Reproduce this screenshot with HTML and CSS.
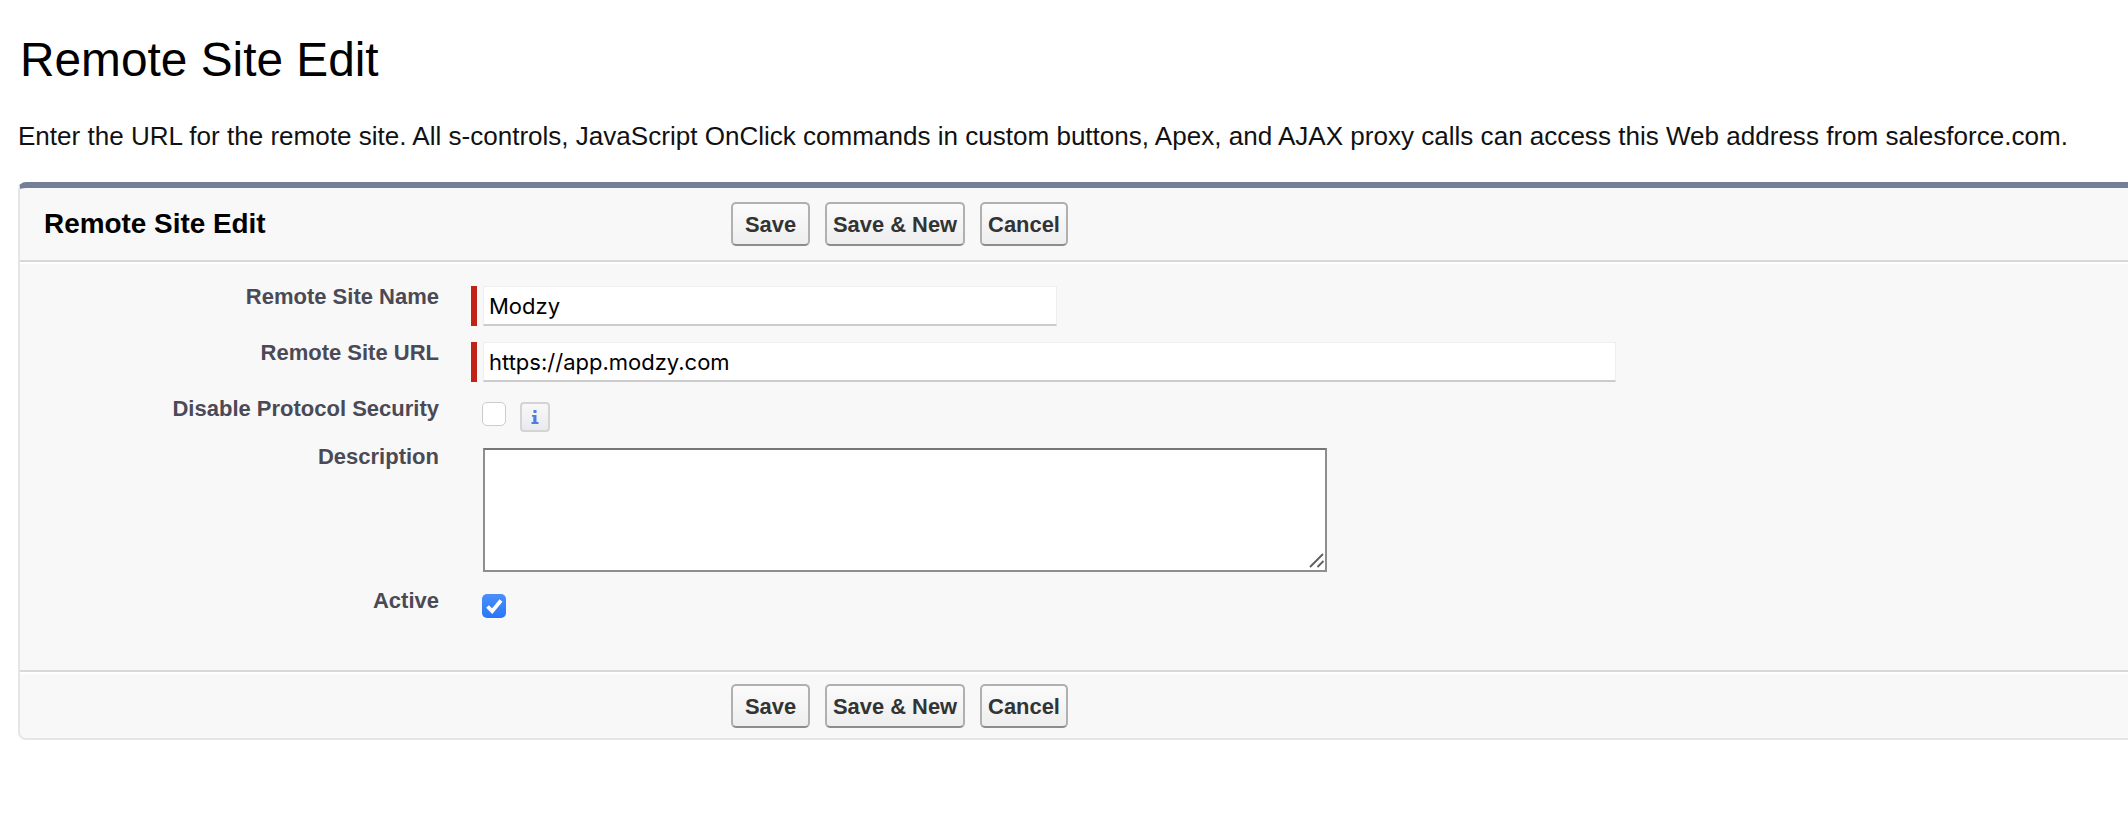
FILE: index.html
```html
<!DOCTYPE html>
<html lang="en">
<head>
<meta charset="utf-8">
<title>Remote Site Edit</title>
<link rel="stylesheet" href="styles.css">
</head>
<body>
<h1 class="page-title">Remote Site Edit</h1>
<p class="intro">Enter the URL for the remote site. All s-controls, JavaScript OnClick commands in custom buttons, Apex, and AJAX proxy calls can access this Web address from salesforce.com.</p>
<form class="panel">
  <div class="panel-header">
    <h2 class="panel-title">Remote Site Edit</h2>
    <div class="buttons">
      <button type="button" class="btn">Save</button>
      <button type="button" class="btn">Save &amp; New</button>
      <button type="button" class="btn">Cancel</button>
    </div>
  </div>
  <div class="panel-body">
    <div class="row row-name">
      <label class="label">Remote Site Name</label>
      <div class="field required"><input class="text text-name" type="text" value="Modzy"></div>
    </div>
    <div class="row row-url">
      <label class="label">Remote Site URL</label>
      <div class="field required"><input class="text text-url" type="text" value="https://app.modzy.com"></div>
    </div>
    <div class="row row-disable">
      <label class="label">Disable Protocol Security</label>
      <div class="field">
        <span class="check"></span>
        <span class="info"><svg width="8" height="14" viewBox="0 0 8 14"><path fill="#4a80dc" d="M2.500 0h3v3h-3zM1 5h4.500v7h2v2H0.500v-2h1.800V6.800H1z"/></svg></span>
      </div>
    </div>
    <div class="row row-desc">
      <label class="label">Description</label>
      <div class="field">
        <div class="area-wrap">
          <textarea class="area"></textarea>
          <svg class="grip" width="16" height="16" viewBox="0 0 16 16"><path d="M1 14L14 1M8.500 14L14.500 8" fill="none" stroke="#5e5e5e" stroke-width="1.800"/></svg>
        </div>
      </div>
    </div>
    <div class="row row-active">
      <label class="label">Active</label>
      <div class="field">
        <span class="check check-on"><svg width="24" height="24" viewBox="0 0 24 24"><path d="M5.500 12.500l4.700 4.700L19 6.500" fill="none" stroke="#fff" stroke-width="3.800"/></svg></span>
      </div>
    </div>
  </div>
  <div class="panel-footer">
    <div class="buttons">
      <button type="button" class="btn">Save</button>
      <button type="button" class="btn">Save &amp; New</button>
      <button type="button" class="btn">Cancel</button>
    </div>
  </div>
</form>
</body>
</html>
```
FILE: styles.css
```css
* { box-sizing: border-box; }
html, body { margin: 0; padding: 0; background: #fff; overflow: hidden; }
body { height: 814px; font-family: "Liberation Sans", Arial, sans-serif; color: #000; padding-top: 30px; }
.page-title { margin: 0 0 0 20px; font-size: 47.8px; line-height: 60px; font-weight: 400; }
.intro { margin: 31px 0 0 18px; font-size: 26.05px; line-height: 30px; white-space: nowrap; color: #111; }
.panel { margin: 31px 0 0 18px; width: 2200px; height: 558px; background: #f8f8f8; border: 2px solid #e6e6e6; border-top: 6px solid #747e96; border-radius: 8px; display: flex; flex-direction: column; }
.panel-header { height: 74px; border-bottom: 2px solid #d8d8d8; display: flex; align-items: center; padding-left: 24px; flex: none; }
.panel-title { margin: 0; width: 687px; font-size: 27.9px; line-height: 32px; font-weight: 700; flex: none; }
.buttons { display: flex; gap: 15px; }
.btn { height: 44px; min-width: 79px; padding: 2px 6px 0; font: 700 21.9px "Liberation Sans", Arial, sans-serif; color: #333; background: linear-gradient(#fbfbfb, #eeeeee); border: 2px solid #b0b0b0; border-bottom-color: #8c8c8c; border-radius: 5px; }
.panel-body { flex: 1; border-top: 2px solid #fff; padding-top: 22px; }
.row { display: grid; grid-template-columns: 419px 1fr; column-gap: 32px; }
.label { text-align: right; font-size: 22px; line-height: 24px; font-weight: 700; color: #4a4a56; }
.field { display: flex; align-items: flex-start; align-self: start; }
.required { border-left: 6px solid #c1221a; padding-left: 6px; }
.row-name { height: 56px; }
.row-url { height: 60px; }
.row-disable { height: 46px; }
.row-desc { height: 146px; }
.row-active { height: 60px; }
.row-name .label, .row-url .label { margin-top: -1px; }
.row-disable .label { margin-top: -5px; }
.row-desc .label { margin-top: -3px; }
.row-active .label { margin-top: -5px; }
.row-disable .field, .row-active .field { padding-left: 11px; }
.row-desc .field { padding-left: 12px; }
.text { height: 40px; padding: 0 0 0 5px; font: 22px Inter, "Liberation Sans", sans-serif; color: #000; background: #fff; border: 1px solid #eee; border-bottom: 2px solid #ccc; outline: 0; border-radius: 0; }
.text-name { width: 574px; }
.text-url { width: 1133px; }
.check { width: 24px; height: 24px; border: 1px solid #ccc; border-radius: 5px; background: #fff; display: block; flex: none; }
.check-on { background: linear-gradient(#4a8ffb, #2a76f6); border: 0; }
.check-on svg { display: block; }
.info { width: 30px; height: 30px; margin-left: 14px; border: 2px solid #d4d4d4; border-radius: 4px; background: linear-gradient(#f8f8f8, #e8eaee); display: flex; align-items: center; justify-content: center; flex: none; }
.area-wrap { position: relative; width: 844px; height: 124px; }
.area { width: 100%; height: 100%; margin: 0; border: 2px solid #8e8e8e; border-top-color: #777; background: #fff; outline: 0; padding: 2px; border-radius: 0; display: block; resize: none; }
.grip { position: absolute; right: 2px; bottom: 3px; }
.panel-footer { height: 68px; padding-top: 2px; border-top: 2px solid #d8d8d8; box-shadow: inset 0 2px 0 #fff; display: flex; align-items: center; padding-left: 711px; flex: none; }
```
